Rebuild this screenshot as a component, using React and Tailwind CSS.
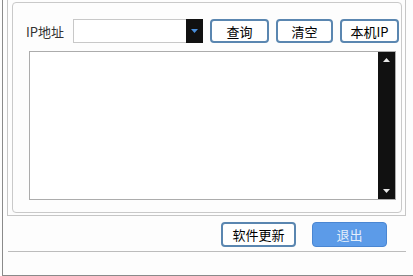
import React from "react";

const font = { fontFamily: '"Microsoft YaHei", "Noto Sans CJK SC", "Noto Sans", sans-serif' };

const Btn = ({ children, className = "" }) => (
  <button
    className={`h-[24px] border-2 border-[#5a86b0] rounded-[4px] bg-white text-[13px] leading-none text-black flex items-center justify-center ${className}`}
  >
    {children}
  </button>
);

const App = () => {
  return (
    <div className="w-[413px] h-[276px] bg-[#fdfdfd] overflow-hidden font-['Noto_Sans_CJK_SC',sans-serif]">
      <div className="ml-[2px] h-[276px] border-l border-b border-[#8a8a8a] pl-[4px]">
        {/* tab page */}
        <div className="w-[399px] h-[216px] border-l border-r border-b border-[#c6c6c6] pl-[4px] pr-[3px] pt-[2px] pb-[2px]">
          {/* group box */}
          <div className="h-[211px] border border-[#c9c9c9] rounded-[4px] pt-[16px]">
            <div className="flex items-center h-[24px] pl-[13px]">
              <span className="w-[47px] text-[13px] text-[#333] leading-none">IP地址</span>
              <div className="w-[130px] h-[24px] flex">
                <div className="flex-1 border border-r-0 border-[#c8c8c8] bg-white" />
                <div className="w-[17px] h-full bg-[#111] flex items-center justify-center">
                  <svg width="7" height="4" viewBox="0 0 7 4">
                    <path d="M0 0 L7 0 L3.5 4 Z" fill="#4a8fdc" />
                  </svg>
                </div>
              </div>
              <Btn className="ml-[7px] w-[59px]">查询</Btn>
              <Btn className="ml-[7px] w-[57px]">清空</Btn>
              <Btn className="ml-[7px] w-[59px]">本机IP</Btn>
            </div>
            {/* output box */}
            <div className="mt-[8px] ml-[16px] w-[367px] h-[149px] border border-[#acacac] bg-white flex justify-end">
              <div className="w-[17px] h-full bg-[#111] flex flex-col items-center justify-between py-[6px]">
                <svg width="7" height="4" viewBox="0 0 7 4">
                  <path d="M0 4 L7 4 L3.5 0 Z" fill="#e8e8e8" />
                </svg>
                <svg width="7" height="4" viewBox="0 0 7 4">
                  <path d="M0 0 L7 0 L3.5 4 Z" fill="#e8e8e8" />
                </svg>
              </div>
            </div>
          </div>
        </div>
        {/* bottom buttons */}
        <div className="mt-[6px] pl-[214px] flex gap-[16px]">
          <button className="w-[75px] h-[25px] border-2 border-[#5a86b0] rounded-[4px] bg-white text-[13px] leading-none text-black">
            软件更新
          </button>
          <button className="w-[75px] h-[25px] border border-[#4a86d2] rounded-[4px] bg-[#5c9be8] text-[13px] leading-none text-[#e4eefb]">
            退出
          </button>
        </div>
        <div className="mt-[4px] ml-[1px] w-[398px] border-t border-[#bcbcbc]" />
      </div>
    </div>
  );
};

export default App;
